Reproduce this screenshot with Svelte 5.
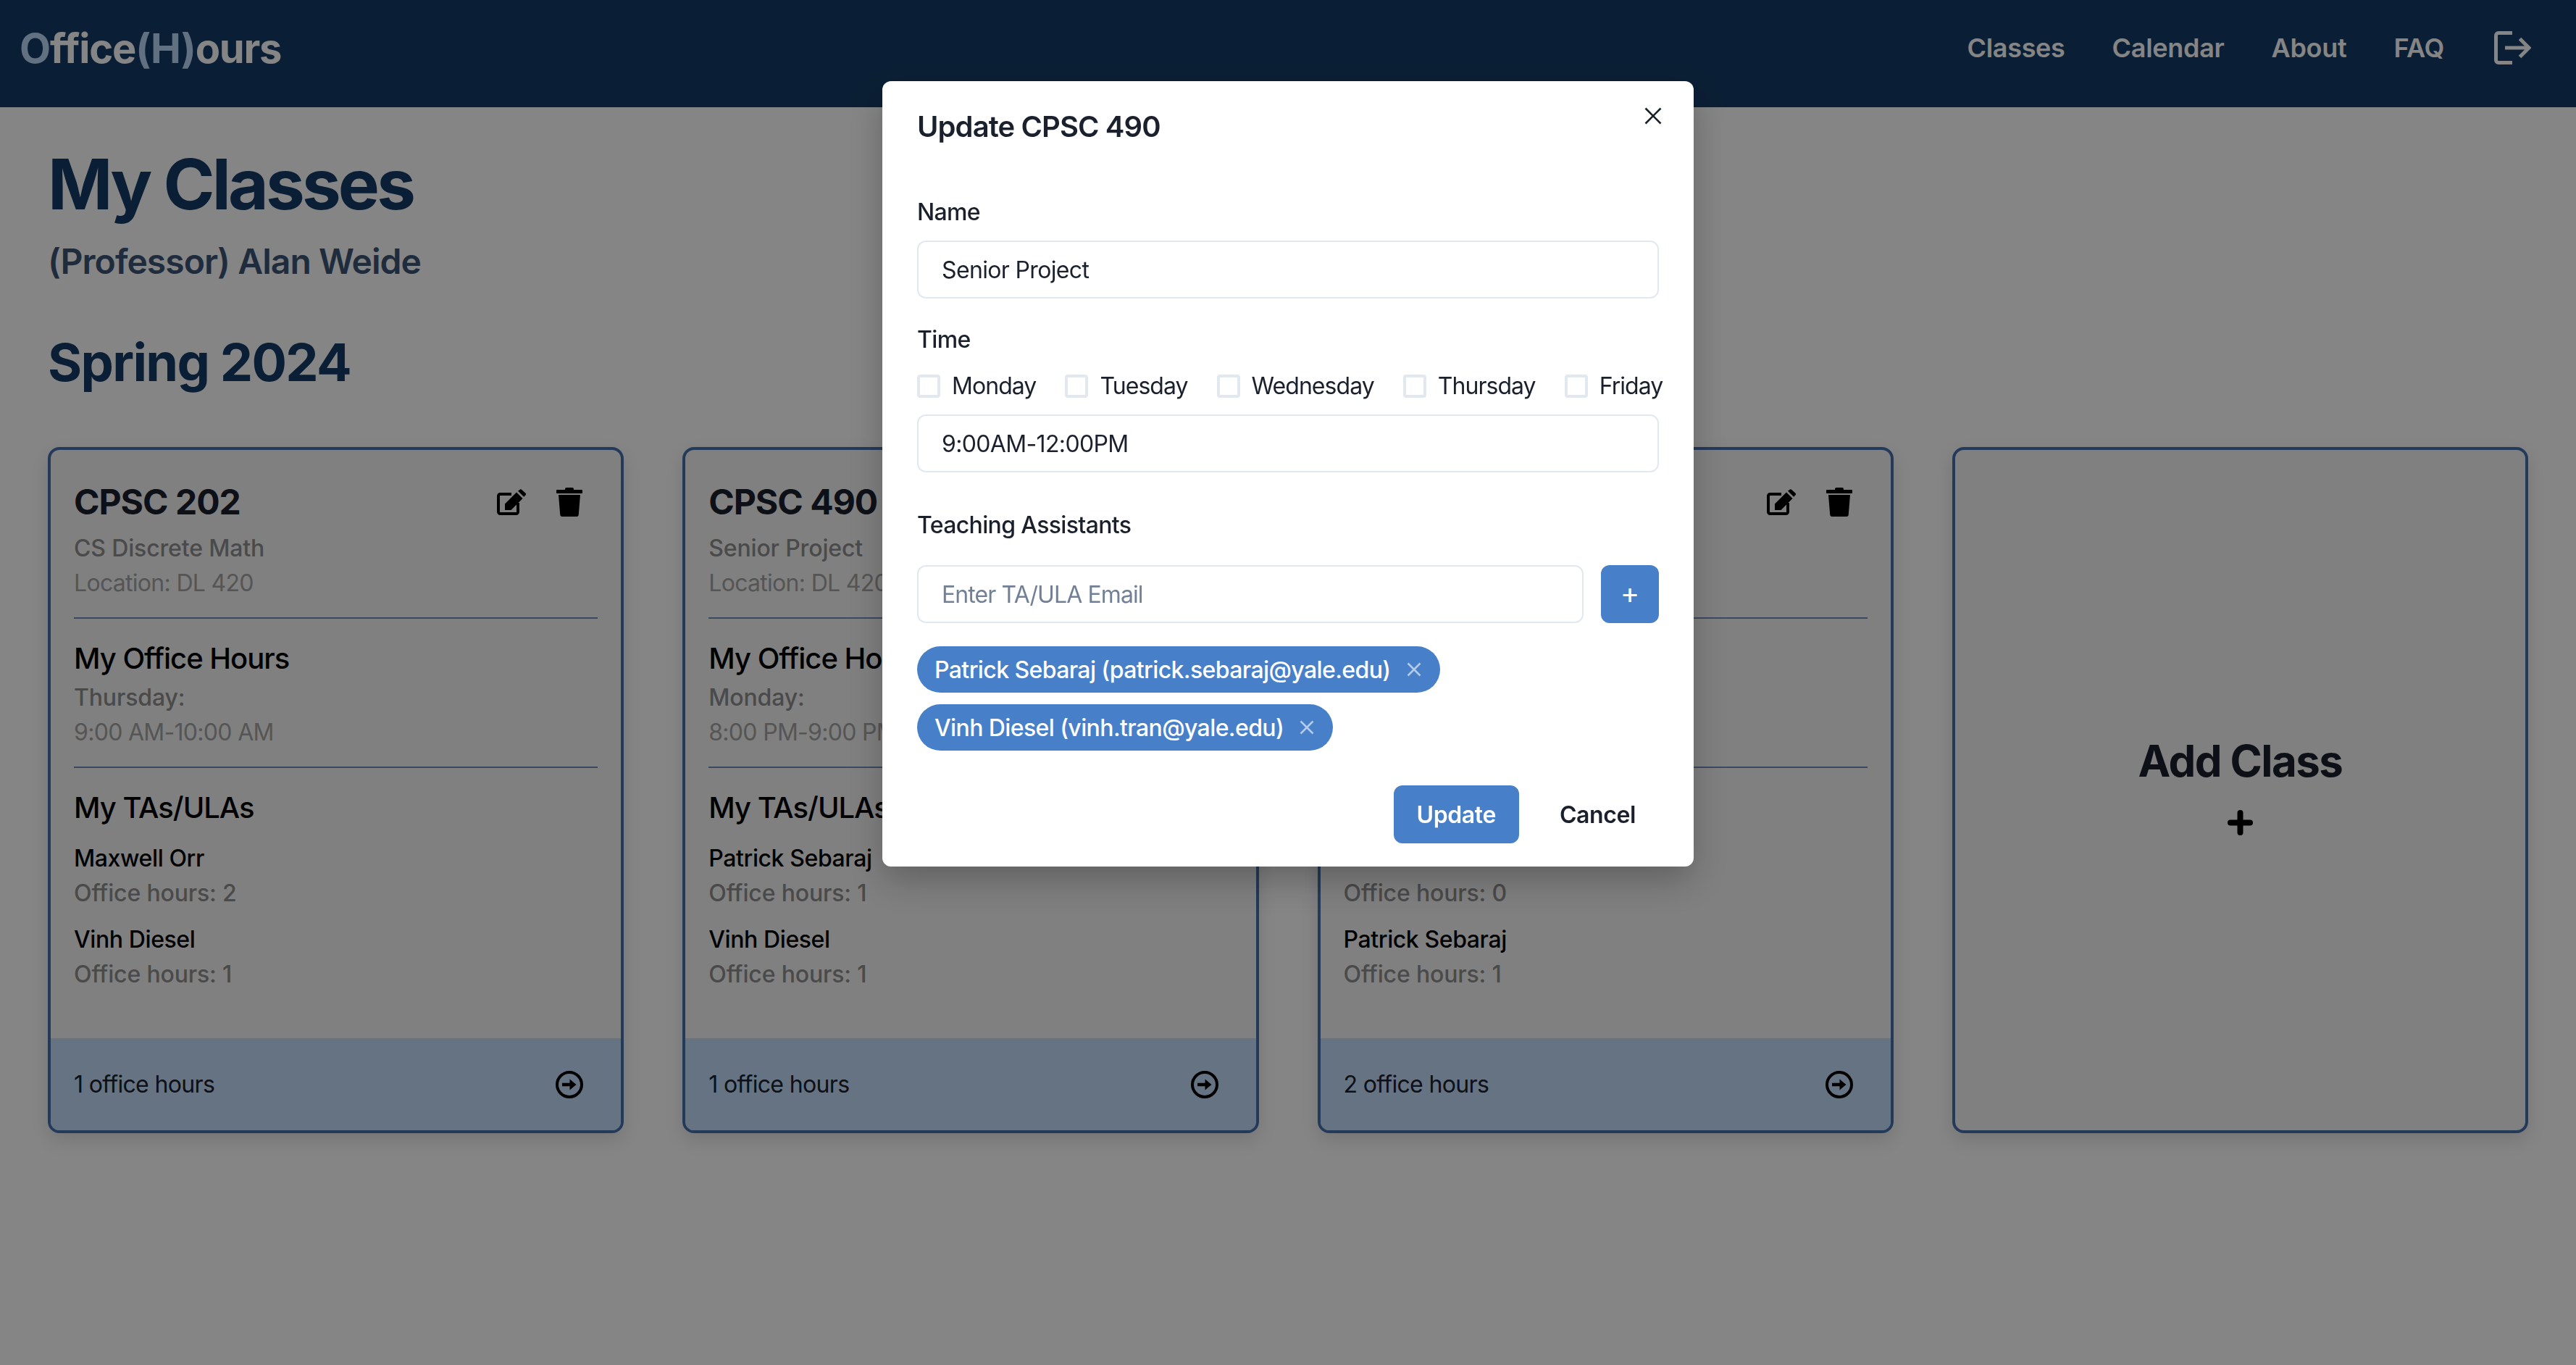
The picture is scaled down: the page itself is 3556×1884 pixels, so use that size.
<script>
  const cards = [
    { code: 'CPSC 202', name: 'CS Discrete Math', day: 'Thursday:', time: '9:00 AM-10:00 AM',
      tas: [['Maxwell Orr', 2], ['Vinh Diesel', 1]], count: 1 },
    { code: 'CPSC 490', name: 'Senior Project', day: 'Monday:', time: '8:00 PM-9:00 PM',
      tas: [['Patrick Sebaraj', 1], ['Vinh Diesel', 1]], count: 1 },
    { code: 'CPSC 323', name: 'Systems Programming', day: 'Tuesday:', time: '1:00 PM-2:00 PM',
      tas: [['Maxwell Orr', 0], ['Patrick Sebaraj', 1]], count: 2 }
  ];
  const days = ['Monday', 'Tuesday', 'Wednesday', 'Thursday', 'Friday'];
  const chips = ['Patrick Sebaraj (patrick.sebaraj@yale.edu)', 'Vinh Diesel (vinh.tran@yale.edu)'];
</script>

<div class="page">
  <nav class="nav">
    <div class="logo"><span class="tint">O</span><span>ffice</span><span class="tint">(H)</span><span>ours</span></div>
    <div class="links">
      <a href="#classes">Classes</a>
      <a href="#calendar">Calendar</a>
      <a href="#about">About</a>
      <a href="#faq">FAQ</a>
      <svg class="logout" viewBox="0 0 51 46" fill="none" stroke="#fff" stroke-width="5">
        <path d="M25 2.500H6A3.500 3.500 0 0 0 2.500 6V40A3.500 3.500 0 0 0 6 43.500H25" />
        <path d="M15 23H46" />
        <path d="M35.500 10.500L48 23L35.500 35.500" />
      </svg>
    </div>
  </nav>

  <main class="main">
    <h1>My Classes</h1>
    <p class="who">(Professor) Alan Weide</p>
    <h2>Spring 2024</h2>

    <div class="grid">
      {#each cards as c}
        <section class="card">
          <div class="body">
            <div class="head">
              <h3>{c.code}</h3>
              <div class="actions">
                <svg class="edit" viewBox="0 0 40 36">
                  <path d="M20 7H4.500A2.500 2.500 0 0 0 2 9.500V31.500A2.500 2.500 0 0 0 4.500 34H26.500A2.500 2.500 0 0 0 29 31.500V19" fill="none" stroke="#000" stroke-width="4" />
                  <path d="M11 20.500L27 4.500L35.500 13L19.500 29H11Z" />
                  <path d="M29 2.800L31.500 0.700A2 2 0 0 1 34 0.700L39.300 5.500A2 2 0 0 1 39.300 8.500L37.200 10.700Z" />
                </svg>
                <svg class="trash" viewBox="0 0 36 40">
                  <rect x="12" y="0" width="12" height="5" rx="2" />
                  <rect x="0" y="3" width="36" height="5" rx="1" />
                  <path d="M3 10H33L30.800 37A3 3 0 0 1 27.800 40H8.200A3 3 0 0 1 5.200 37Z" />
                </svg>
              </div>
            </div>
            <p class="strong">{c.name}</p>
            <p class="muted">Location: DL 420</p>
            <hr />
            <h4>My Office Hours</h4>
            <p class="strong">{c.day}</p>
            <p class="muted">{c.time}</p>
            <hr />
            <h4>My TAs/ULAs</h4>
            <div class="tas">
              {#each c.tas as ta}
                <div class="ta">
                  <p class="ta-name">{ta[0]}</p>
                  <p class="strong">Office hours: {ta[1]}</p>
                </div>
              {/each}
            </div>
          </div>
          <div class="foot">
            <span>{c.count} office hours</span>
            <svg class="go" viewBox="0 0 38 38">
              <circle cx="19" cy="19" r="17" fill="none" stroke="#000" stroke-width="4" />
              <path d="M9 16.700H19.500V11.500L28.500 19L19.500 26.500V21.300H9Z" />
            </svg>
          </div>
        </section>
      {/each}
      <section class="card add">
        <span class="add-label">Add Class</span>
        <svg class="add-plus" viewBox="0 0 35 35" fill="none" stroke="#000" stroke-width="8" stroke-linecap="round">
          <path d="M4 17.500H31" />
          <path d="M17.500 4V31" />
        </svg>
      </section>
    </div>
  </main>
</div>

<div class="overlay">
  <div class="modal">
    <header class="m-head">Update CPSC 490</header>
    <svg class="close" viewBox="0 0 24 24" fill="none" stroke="#1a202c" stroke-width="2.600">
      <path d="M1.500 1.500L22.500 22.500M22.500 1.500L1.500 22.500" />
    </svg>
    <div class="m-body">
      <div class="label">Name</div>
      <input class="input" value="Senior Project" />
      <div class="label time">Time</div>
      <div class="days">
        {#each days as d}
          <div class="day"><span class="box"></span><span>{d}</span></div>
        {/each}
      </div>
      <input class="input" value="9:00AM-12:00PM" />
      <div class="label tas-label">Teaching Assistants</div>
      <div class="add-row">
        <input class="input" placeholder="Enter TA/ULA Email" />
        <button class="plus">+</button>
      </div>
      <div class="chips">
        {#each chips as chip}
          <div class="chip">
            <span>{chip}</span>
            <svg viewBox="0 0 20 20" fill="none" stroke="#fff" stroke-opacity="0.6" stroke-width="2.500">
              <path d="M1.500 1.500L18.500 18.500M18.500 1.500L1.500 18.500" />
            </svg>
          </div>
        {/each}
      </div>
    </div>
    <footer class="m-foot">
      <button class="primary">Update</button>
      <button class="ghost">Cancel</button>
    </footer>
  </div>
</div>

<style>
  :global(body) {
    margin: 0;
    background: #fff;
    font-family: Inter, "Liberation Sans", sans-serif;
    color: #1a202c;
  }
  :global(*) { box-sizing: border-box; }

  .page { min-height: 1884px; }

  .nav {
    height: 148px;
    background: #153b66;
    display: flex;
    align-items: center;
    justify-content: space-between;
    padding: 0 62px 16px 27px;
    color: #fff;
  }
  .logo { font-size: 56px; font-weight: 700; line-height: 1.2; letter-spacing: -1.2px; margin-top: 3px; }
  .tint { color: #bcd8f8; }
  .links { display: flex; align-items: center; gap: 65px; font-size: 36px; font-weight: 600; letter-spacing: -0.3px; }
  .links a { color: #fff; text-decoration: none; }
  .logout { width: 51px; height: 46px; margin-left: 4px; }

  .main { padding: 49px 66px 0; }
  h1 { margin: 0 0 13px; font-size: 96px; line-height: 115px; font-weight: 700; color: #153b66; letter-spacing: -3.8px; }
  .who { margin: 0 0 60px; font-size: 48px; line-height: 72px; font-weight: 600; color: #3d5575; letter-spacing: -0.95px; }
  h2 { margin: 0 0 74px; font-size: 72px; line-height: 86px; font-weight: 700; color: #153b66; letter-spacing: -1.65px; }

  .grid { display: grid; grid-template-columns: repeat(4, 1fr); gap: 81px; }
  .card {
    background: #f6f6f6;
    border: 4px solid #4670ad;
    border-radius: 16px;
    box-shadow: 0 10px 24px rgba(0, 0, 0, 0.12);
    display: flex;
    flex-direction: column;
    overflow: hidden;
  }
  .body { flex: 1; padding: 36px 32px 64px; }
  .head { display: flex; justify-content: space-between; align-items: center; }
  h3 { margin: 0 0 4px; font-size: 48px; line-height: 72px; font-weight: 700; color: #1a202c; letter-spacing: -1px; }
  .actions { display: flex; align-items: center; gap: 42px; margin: 0 21px 4px 0; }
  .edit { width: 40px; height: 36px; }
  .trash { width: 36px; height: 40px; }
  p { margin: 0; font-size: 32px; line-height: 48px; }
  .strong { font-weight: 500; color: #8e8e8e; letter-spacing: -0.15px; }
  .muted { font-weight: 400; color: #a4a4a4; letter-spacing: -0.7px; }
  hr { border: 0; height: 2px; background: #6f8fbc; margin: 23px 0 25px; }
  h4 { margin: 0; font-size: 40px; line-height: 60px; font-weight: 500; color: #000; letter-spacing: -1px; }
  .tas { display: flex; flex-direction: column; gap: 15px; margin-top: 16px; }
  .ta + .ta { margin-top: 1px; }
  .ta-name { font-weight: 500; color: #000; letter-spacing: -0.4px; }
  .foot {
    height: 127px;
    background: #c3ddfb;
    padding: 0 52px 0 32px;
    display: flex;
    align-items: center;
    justify-content: space-between;
    font-size: 32px;
    color: #1a202c;
    letter-spacing: -0.65px;
  }
  .go { width: 38px; height: 38px; }

  .add { align-items: center; justify-content: center; padding-bottom: 12px; gap: 34px; }
  .add-label { font-size: 60px; line-height: 68px; font-weight: 700; color: #1a202c; letter-spacing: -1.6px; }
  .add-plus { width: 35px; height: 35px; }

  .overlay {
    position: fixed;
    inset: 0;
    background: rgba(0, 0, 0, 0.48);
    display: flex;
    justify-content: center;
    align-items: flex-start;
    padding-top: 112px;
  }
  .modal {
    position: relative;
    width: 1120px;
    background: #fff;
    border-radius: 12px;
    box-shadow: 0 20px 50px rgba(0, 0, 0, 0.25);
    letter-spacing: -0.65px;
  }
  .m-head { padding: 33px 48px 31px; font-size: 40px; line-height: 60px; font-weight: 600; color: #1a202c; letter-spacing: -0.9px; }
  .close { position: absolute; top: 36px; right: 44px; width: 24px; height: 24px; }
  .m-body { padding: 33px 48px 0; }
  .label { font-size: 32px; line-height: 48px; font-weight: 500; margin-bottom: 15px; color: #1a202c; }
  .label.time { margin-top: 33px; margin-bottom: 16px; }
  .label.tas-label { margin-top: 49px; margin-bottom: 31px; }
  .input {
    display: block;
    width: 100%;
    height: 80px;
    border: 2px solid #e2e8f0;
    border-radius: 12px;
    padding: 0 32px;
    font: 400 32px Inter, "Liberation Sans", sans-serif;
    letter-spacing: -0.65px;
    color: #1a202c;
    background: #fff;
    outline: none;
  }
  .input::placeholder { color: #718096; opacity: 1; letter-spacing: -0.9px; }
  .days { display: flex; gap: 40px; height: 48px; margin-bottom: 15px; white-space: nowrap; font-size: 32px; line-height: 48px; letter-spacing: -0.95px; }
  .day { display: flex; align-items: center; gap: 16px; }
  .box { width: 32px; height: 32px; border: 4px solid #e2e8f0; border-radius: 4px; }
  .add-row { display: flex; gap: 24px; }
  .plus {
    flex: none;
    width: 80px;
    height: 80px;
    border: 0;
    border-radius: 12px;
    background: #4780c8;
    color: #fff;
    font: 400 40px Inter, sans-serif;
    padding: 0 0 4px;
  }
  .chips { display: flex; flex-direction: column; align-items: flex-start; gap: 16px; margin-top: 32px; }
  .chip {
    height: 64px;
    border-radius: 32px;
    background: #4780c8;
    color: #fff;
    padding: 0 26px 0 24px;
    display: flex;
    align-items: center;
    gap: 22px;
    font-size: 32px;
    font-weight: 500;
    letter-spacing: -0.6px;
  }
  .chip svg { width: 20px; height: 20px; }
  .m-foot { display: flex; justify-content: flex-end; gap: 24px; padding: 48px 48px 32px; }
  .primary, .ghost {
    height: 80px;
    padding: 0 32px;
    border: 0;
    border-radius: 12px;
    font: 600 32px Inter, sans-serif;
    letter-spacing: -0.4px;
  }
  .primary { background: #4780c8; color: #fff; }
  .ghost { background: transparent; color: #1a202c; }
</style>
